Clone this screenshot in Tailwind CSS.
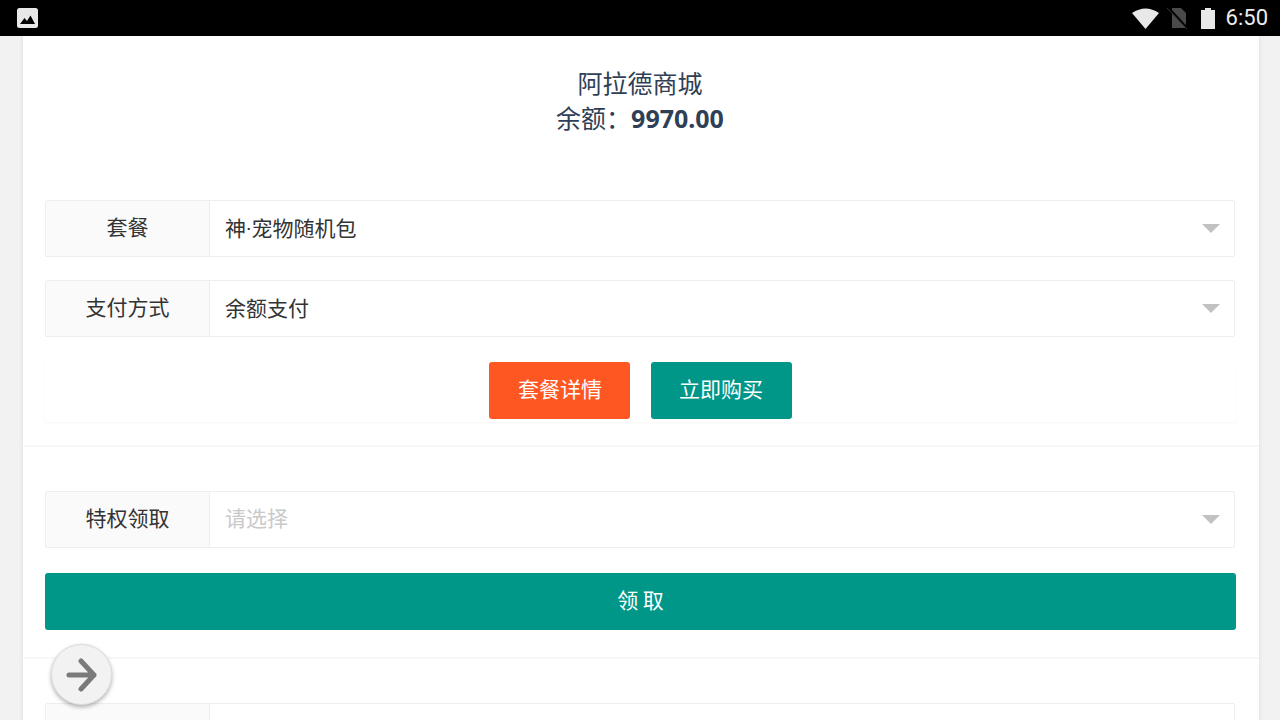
<!DOCTYPE html>
<html><head><meta charset="utf-8"><script src="https://cdn.jsdelivr.net/npm/@tailwindcss/browser@4"></script></head>
<body class="m-0 p-0">
<div class="relative w-[1280px] h-[720px] overflow-hidden bg-[#f2f2f2] font-['Noto_Sans_CJK_SC','Noto_Sans',sans-serif]">
  <div class="h-[36px] bg-black flex items-center justify-between pl-[17px] pr-[12px] text-white">
    <svg width="21" height="20" viewBox="0 0 21 20"><rect width="21" height="20" rx="2.5" fill="#e8e8e8"/><path d="M3 16 L7.5 10 L10 13 L13.5 7.5 L18 16 Z" fill="#000"/></svg>
    <div class="flex items-center">
      <svg width="27" height="21" viewBox="0 0 27 21" class="mr-[8px]"><path d="M0 5 Q13.5 -4 27 5 L13.5 21 Z" fill="#e8e8e8"/></svg>
      <svg width="22" height="22" viewBox="0 0 22 22" class="mr-[12px]"><path d="M5 1 H14 L19 6 V21 H5 Z" fill="#4a4a4a"/><path d="M1 0 L21 22" stroke="#000" stroke-width="2"/><path d="M0 1 L20 22" stroke="#333" stroke-width="1"/></svg>
      <svg width="14" height="21" viewBox="0 0 14 21" class="mr-[11px]"><path d="M4 0 H10 V2 H14 V21 H0 V2 H4 Z" fill="#e8e8e8"/></svg>
      <span class="text-[22px] leading-none text-[#ececec] font-['Roboto',sans-serif]">6:50</span>
    </div>
  </div>
  <div class="w-[1236px] ml-[23px] bg-[#f8f8f8] shadow-[0_0_4px_rgba(0,0,0,0.1)]">
    <div class="h-[409px] bg-white px-[22px] pt-[28px]">
      <div class="text-center text-[25px] leading-[36px] text-[#2f4056] h-[136px] pr-[2px]">
        <div>阿拉德商城</div>
        <div class="-mt-[1px]">余额：<span class="font-bold font-['Noto_Sans',sans-serif] text-[25px]">9970.00</span></div>
      </div>
      <div class="flex flex-col gap-[23px]">
        <div class="flex h-[57px] w-[1190px] border border-[#eeeeee] rounded-[2px]">
          <div class="w-[164px] bg-[#fafafa] border-r border-[#eeeeee] flex items-center justify-center text-[21px] text-[#333] pb-[4px]">套餐</div>
          <div class="relative flex-1 flex items-center pl-[15px] text-[21px] text-[#333]"><span>神<span class="font-['Roboto',sans-serif]">·</span>宠物随机包</span><span class="absolute right-[14px] top-[23px] w-0 h-0 border-x-[9px] border-x-transparent border-t-[9px] border-t-[#c2c2c2]"></span></div>
        </div>
        <div class="flex h-[57px] w-[1190px] border border-[#eeeeee] rounded-[2px]">
          <div class="w-[164px] bg-[#fafafa] border-r border-[#eeeeee] flex items-center justify-center text-[21px] text-[#333] pb-[4px]">支付方式</div>
          <div class="relative flex-1 flex items-center pl-[15px] pb-[2px] text-[21px] text-[#333]">余额支付<span class="absolute right-[14px] top-[23px] w-0 h-0 border-x-[9px] border-x-transparent border-t-[9px] border-t-[#c2c2c2]"></span></div>
        </div>
      </div>
      <div class="mt-[25px] w-[1191px] h-[60px] rounded-[2px] shadow-[0_1px_3px_rgba(0,0,0,0.04)] flex justify-center gap-[21px]">
        <div class="w-[141px] h-[57px] bg-[#ff5722] rounded-[3px] text-white text-[21px] flex items-center justify-center pb-[4px] pl-[1px]">套餐详情</div>
        <div class="w-[141px] h-[57px] bg-[#009688] rounded-[3px] text-white text-[21px] flex items-center justify-center pb-[4px] pr-[1px]">立即购买</div>
      </div>
    </div>
    <div class="mt-[2px] h-[210px] bg-white px-[22px] pt-[44px]">
      <div class="flex h-[57px] w-[1190px] border border-[#eeeeee] rounded-[2px]">
        <div class="w-[164px] bg-[#fafafa] border-r border-[#eeeeee] flex items-center justify-center text-[21px] text-[#333] pb-[4px]">特权领取</div>
        <div class="relative flex-1 flex items-center pl-[15px] pb-[4px] text-[21px] text-[#c9c9c9]">请选择<span class="absolute right-[14px] top-[23px] w-0 h-0 border-x-[9px] border-x-transparent border-t-[9px] border-t-[#c2c2c2]"></span></div>
      </div>
      <div class="mt-[25px] w-[1191px] h-[57px] bg-[#009688] rounded-[3px] text-white text-[21px] flex items-center justify-center pb-[4px]">领 取</div>
    </div>
    <div class="mt-[2px] h-[100px] bg-white px-[22px] pt-[44px]">
      <div class="flex h-[57px] w-[1190px] border border-[#eeeeee] rounded-[2px]">
        <div class="w-[164px] bg-[#fafafa] border-r border-[#eeeeee] flex items-center justify-center text-[21px] text-[#333] pb-[4px]">支付方式</div>
        <div class="flex-1 flex items-center pl-[15px] pb-[4px] text-[21px] text-[#333]">余额</div>
      </div>
    </div>
  </div>
  <div class="absolute left-[51px] top-[644px] w-[61px] h-[61px] rounded-full bg-[#f2f2f2] border border-[#ddd] shadow-[0_2px_4px_rgba(0,0,0,0.3)] flex items-center justify-center">
    <svg width="32" height="34" viewBox="0 0 32 34" fill="none" stroke="#7a7a7a" stroke-width="5" stroke-linecap="round" stroke-linejoin="round"><path d="M3 17 H28 M15 3 L28 17 L15 31"/></svg>
  </div>
</div>
</body></html>
